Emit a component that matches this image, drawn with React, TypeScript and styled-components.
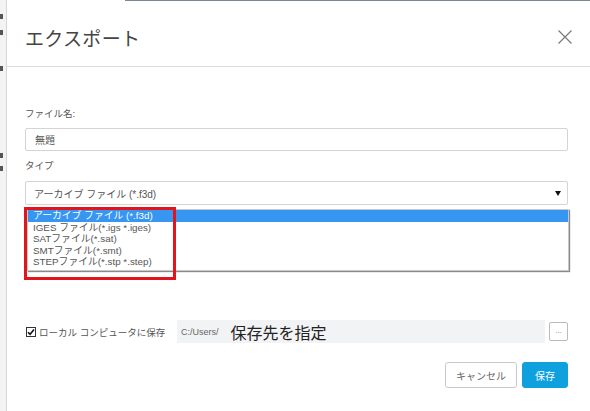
import styled, { createGlobalStyle } from "styled-components";

const GlobalStyle = createGlobalStyle`
  html, body {
    margin: 0;
    padding: 0;
    background: #ffffff;
  }
  body {
    font-family: "Liberation Sans", "Noto Sans CJK JP", sans-serif;
  }
`;

const fileTypes = [
  "アーカイブ ファイル (*.f3d)",
  "IGES ファイル(*.igs *.iges)",
  "SATファイル(*.sat)",
  "SMTファイル(*.smt)",
  "STEPファイル(*.stp *.step)",
];

const CloseIcon = () => (
  <svg width="16" height="16" viewBox="0 0 16 16">
    <path d="M1.5 1.5 L14.5 14.5 M14.5 1.5 L1.5 14.5" stroke="#7a7a7a" strokeWidth="1.2" fill="none" />
  </svg>
);

const CheckMark = () => (
  <svg width="8" height="8" viewBox="0 0 8 8">
    <path d="M1 4.2 L3.1 6.3 L7 1.6" stroke="#111" strokeWidth="1.6" fill="none" />
  </svg>
);

export default function App() {
  return (
    <>
      <GlobalStyle />
      <Screen>
        <Backdrop>
          <Mark $top={14} />
          <Mark $top={30} />
          <Mark $top={66} />
          <Mark $top={153} />
          <Mark $top={166} />
        </Backdrop>
        <Dialog>
          <Header>
            <Title>エクスポート</Title>
            <CloseButton>
              <CloseIcon />
            </CloseButton>
          </Header>
          <Body>
            <Label $top={41}>ファイル名:</Label>
            <TextInput>無題</TextInput>
            <Label $top={9}>タイプ</Label>
            <SelectWrap>
              <SelectBox>
                <span>アーカイブ ファイル (*.f3d)</span>
                <Arrow />
              </SelectBox>
              <OptionList>
                {fileTypes.map((t, i) => (
                  <OptionItem key={t} $selected={i === 0}>
                    {t}
                  </OptionItem>
                ))}
              </OptionList>
              <Highlight />
            </SelectWrap>
            <SaveRow>
              <CheckLabel>
                <CheckBox>
                  <CheckMark />
                </CheckBox>
                ローカル コンピュータに保存
              </CheckLabel>
              <PathBox>
                <PathText>C:/Users/</PathText>
                <PathHint>保存先を指定</PathHint>
              </PathBox>
              <BrowseButton>...</BrowseButton>
            </SaveRow>
            <Footer>
              <Button>キャンセル</Button>
              <Button $primary>保存</Button>
            </Footer>
          </Body>
        </Dialog>
      </Screen>
    </>
  );
}

const Screen = styled.div`
  display: flex;
  width: 590px;
  height: 411px;
  overflow: hidden;
  background: #ffffff;
`;

const Backdrop = styled.div`
  position: relative;
  width: 6px;
  flex-shrink: 0;
  background: #f3f3f3;
  border-right: 1px solid #d6d6d6;
`;

const Mark = styled.div<{ $top: number }>`
  position: absolute;
  left: 0;
  top: ${(p) => p.$top}px;
  width: 3px;
  height: 5px;
  background: #555;
`;

const Dialog = styled.div`
  position: relative;
  flex: 1;
  display: flex;
  flex-direction: column;
  background: #ffffff;
  &::before {
    content: "";
    position: absolute;
    top: 0;
    left: 118px;
    right: 0;
    height: 1px;
    background: #7d8791;
  }
`;

const Header = styled.div`
  height: 67px;
  display: flex;
  align-items: center;
  justify-content: space-between;
  padding: 8px 17px 0 18px;
  border-bottom: 1px solid #dcdcdc;
  box-sizing: border-box;
`;

const Title = styled.h1`
  margin: 0;
  font-size: 19px;
  font-weight: 400;
  color: #444;
  letter-spacing: 0.3px;
`;

const CloseButton = styled.div`
  display: flex;
`;

const Body = styled.div`
  display: flex;
  flex-direction: column;
  padding: 0 22px 0 18px;
`;

const Label = styled.div<{ $top: number }>`
  margin-top: ${(p) => p.$top}px;
  font-size: 9.5px;
  line-height: 12px;
  color: #555;
`;

const TextInput = styled.div`
  margin-top: 8px;
  height: 23px;
  box-sizing: border-box;
  border: 1px solid #d4d4d4;
  border-radius: 2px;
  padding: 0 9px;
  display: flex;
  align-items: center;
  font-size: 10px;
  color: #555;
`;

const SelectWrap = styled.div`
  position: relative;
  margin-top: 9px;
`;

const SelectBox = styled.div`
  height: 24px;
  box-sizing: border-box;
  border: 1px solid #d4d4d4;
  border-radius: 2px;
  padding: 0 6px 0 8px;
  display: flex;
  align-items: center;
  justify-content: space-between;
  font-size: 10px;
  color: #555;
`;

const Arrow = styled.span`
  width: 0;
  height: 0;
  border-left: 3.5px solid transparent;
  border-right: 3.5px solid transparent;
  border-top: 5px solid #111;
`;

const OptionList = styled.div`
  position: absolute;
  top: 28px;
  left: 2px;
  right: -1px;
  background: #fff;
  border: 1px solid #c8c8c8;
  box-shadow: 1px 1px 1px #8a8a8a;
  padding-bottom: 2px;
`;

const OptionItem = styled.div<{ $selected?: boolean }>`
  height: 11.5px;
  line-height: 11.5px;
  padding-left: 5px;
  font-size: 9.8px;
  color: ${(p) => (p.$selected ? "#ffffff" : "#555")};
  background: ${(p) => (p.$selected ? "#3796f2" : "transparent")};
`;

const Highlight = styled.div`
  position: absolute;
  top: 26px;
  left: -1px;
  width: 152px;
  height: 73px;
  box-sizing: border-box;
  border: 3px solid #e3151c;
`;

const SaveRow = styled.div`
  margin-top: 115px;
  display: grid;
  grid-template-columns: 148px 1fr 19px;
  column-gap: 4px;
  align-items: center;
`;

const CheckLabel = styled.label`
  display: flex;
  align-items: center;
  gap: 3px;
  font-size: 9.5px;
  color: #555;
  padding-left: 1px;
`;

const CheckBox = styled.span`
  width: 10px;
  height: 10px;
  box-sizing: border-box;
  border: 1px solid #333;
  display: flex;
  align-items: center;
  justify-content: center;
  background: #fff;
`;

const PathBox = styled.div`
  height: 23px;
  background: #f2f3f5;
  display: flex;
  align-items: center;
  padding-left: 4px;
  gap: 12px;
`;

const PathText = styled.span`
  font-size: 9px;
  color: #666;
`;

const PathHint = styled.span`
  font-family: "Noto Sans CJK JP", sans-serif;
  font-size: 16px;
  color: #222;
`;

const BrowseButton = styled.div`
  height: 19px;
  box-sizing: border-box;
  border: 1px solid #bbb;
  border-radius: 2px;
  font-size: 8px;
  color: #888;
  display: flex;
  align-items: center;
  justify-content: center;
  padding-bottom: 3px;
`;

const Footer = styled.div`
  margin-top: 19px;
  display: flex;
  justify-content: flex-end;
  gap: 5px;
`;

const Button = styled.div<{ $primary?: boolean }>`
  height: 26px;
  box-sizing: border-box;
  padding: 0 ${(p) => (p.$primary ? 12 : 10)}px;
  border-radius: 3px;
  display: flex;
  align-items: center;
  font-size: 10px;
  border: 1px solid ${(p) => (p.$primary ? "#0ea1dd" : "#c9c9c9")};
  background: ${(p) => (p.$primary ? "#0ea1dd" : "#fff")};
  color: ${(p) => (p.$primary ? "#fff" : "#666")};
`;
